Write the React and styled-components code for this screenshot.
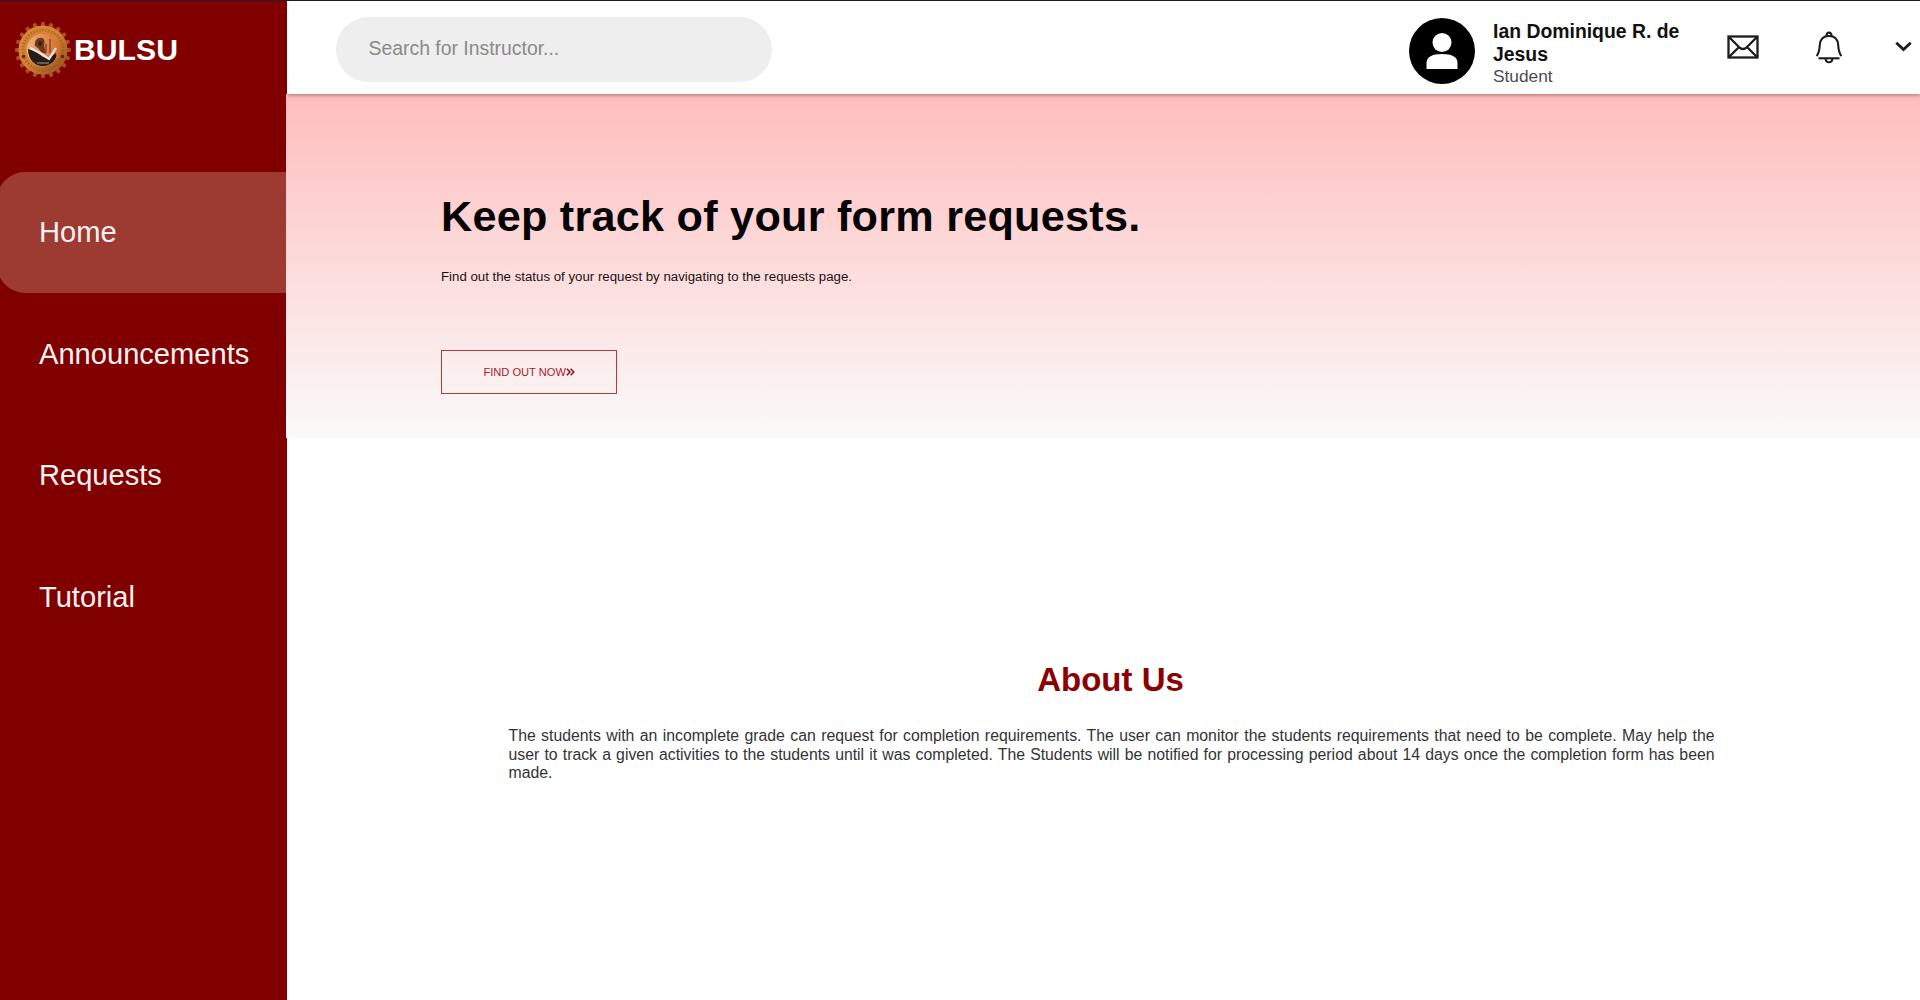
import React from "react";
import styled, { createGlobalStyle } from "styled-components";

const GlobalStyle = createGlobalStyle`
  * { box-sizing: border-box; }
  body {
    margin: 0;
    background: #fff;
    font-family: "Liberation Sans", Arial, sans-serif;
    overflow: hidden;
  }
`;

const Page = styled.div`
  display: flex;
  width: 1920px;
  height: 1000px;
  border-top: 1px solid #231a33;
  background: #fff;
`;

const Sidebar = styled.aside`
  flex: 0 0 287px;
  background: #800000;
  overflow: hidden;
`;

const Brand = styled.div`
  display: flex;
  align-items: center;
  gap: 3px;
  height: 98px;
  padding-left: 15px;
  color: #fff;
  font-size: 30.2px;
  font-weight: 700;
`;

const Nav = styled.nav`
  display: flex;
  flex-direction: column;
  padding-top: 72.6px;
`;

const NavItem = styled.a`
  display: flex;
  align-items: center;
  height: 121.7px;
  margin: 0 1.5px 0 -3px;
  padding-left: 42px;
  border-radius: 28px 0 0 28px;
  background: ${(p) => (p.$active ? "#9d3b33" : "transparent")};
  color: #f7f1f1;
  font-size: 29.1px;
`;

const Main = styled.main`
  display: flex;
  flex-direction: column;
  flex: 1;
  min-width: 0;
`;

const Header = styled.header`
  position: relative;
  z-index: 1;
  display: flex;
  align-items: flex-start;
  flex: 0 0 93px;
  padding: 0 8px 0 48.5px;
  background: #fff;
  box-shadow: 0 1px 4px rgba(60, 0, 0, 0.42);
`;

const Search = styled.input`
  width: 436px;
  height: 65px;
  margin: 15.6px auto 0 0;
  padding: 0 33px 1px;
  border: 0;
  border-radius: 33px;
  outline: 0;
  background: #eee;
  font: 19.4px "Liberation Sans", Arial, sans-serif;
  &::placeholder { color: #8a8a8a; opacity: 1; }
`;

const Avatar = styled.svg`
  width: 66px;
  height: 66px;
  margin: 17px 18.5px 0 0;
`;

const Profile = styled.div`
  width: 190px;
  margin: 19px 44px 0 0;
`;

const Name = styled.div`
  color: #111;
  font-size: 19.4px;
  font-weight: 700;
  line-height: 22.5px;
`;

const Role = styled.div`
  color: #4c4c4c;
  font-size: 17.3px;
  line-height: 22px;
`;

const HeaderIcon = styled.svg`
  flex: none;
  width: ${(p) => p.$w}px;
  height: ${(p) => p.$h}px;
  margin: ${(p) => p.$top}px ${(p) => p.$gap || 0}px 0 0;
  fill: none;
  stroke: #1c1c1c;
`;

const Hero = styled.section`
  display: flex;
  flex-direction: column;
  align-items: flex-start;
  flex: 0 0 344px;
  margin-left: -1px;
  padding: 97px 0 0 155px;
  background: linear-gradient(#ffbdbd, #fafafa);
`;

const Headline = styled.h1`
  margin: 0;
  color: #050303;
  font-size: 43.2px;
  line-height: 50px;
  letter-spacing: 0.25px;
`;

const Lead = styled.p`
  margin: 27.5px 0 65.5px;
  color: #1b1212;
  font-size: 13.25px;
  line-height: 16px;
`;

const FindButton = styled.button`
  display: flex;
  align-items: center;
  width: 176px;
  height: 44px;
  padding: 0 0 0 41.5px;
  border: 1px solid #b4383f;
  background: transparent;
  color: #a3222c;
  font: 11.1px "Liberation Sans", Arial, sans-serif;
  white-space: nowrap;
`;

const Chevrons = styled.svg`
  width: 9px;
  height: 8px;
  fill: none;
  stroke: #8b0f18;
  stroke-width: 1.5;
`;

const About = styled.section`
  width: 1206px;
  margin-left: 221.5px;
  padding-top: 223px;
`;

const AboutTitle = styled.h2`
  margin: 0;
  padding-right: 2px;
  color: #8b0000;
  font-size: 33px;
  line-height: 38px;
  text-align: center;
`;

const AboutText = styled.p`
  margin: 28px 0 0;
  color: #333;
  font-size: 15.8px;
  line-height: 18.6px;
  text-align: justify;
`;

const teeth = Array.from({ length: 20 }, (_, i) => i * 18);

function Seal() {
  return (
    <svg width="56" height="58" viewBox="-28 -29 56 58">
      <defs>
        <linearGradient id="rim" x1="0" y1="0" x2="1" y2="1">
          <stop offset="0" stopColor="#d98a35" />
          <stop offset=".5" stopColor="#d58035" />
          <stop offset="1" stopColor="#8e4a1b" />
        </linearGradient>
        <linearGradient id="face" x1="0" y1="0" x2="1" y2="0">
          <stop offset="0" stopColor="#e9b47a" />
          <stop offset="1" stopColor="#d96d2e" />
        </linearGradient>
      </defs>
      {teeth.map((a) => (
        <rect key={a} x="-2" y="-28" width="4" height="6" rx="1.2" fill="#a8501f" transform={`rotate(${a})`} />
      ))}
      <circle r="24.5" fill="url(#rim)" />
      <circle r="20" fill="none" stroke="#8d5a20" strokeWidth="3" strokeDasharray="1.4 1.7" opacity=".6" />
      <circle r="16.3" fill="url(#face)" />
      <path d="M-15-1L-8 1L0 7L6 8L13 3C15 9 8 16 0 16C-8 16-15 10-15-1Z" fill="#241c17" />
      <path d="M-8-4C-9-10-5-13-1-12C2-11 2-8 1-5L3 4L-2 2L-5-2Z" fill="#70351c" />
      <path d="M-4-9L-1-8L-2-4L-5-5Z" fill="#2c201c" />
      <path d="M7-11V3M3-6V3" stroke="#8f4b22" strokeWidth="1.5" />
      <path d="M-13-2L-3 3L6 9L13-2" fill="none" stroke="#e9e4df" strokeWidth="2.3" />
      <path d="M-6 13H6" stroke="#8c8680" strokeWidth="1.2" />
      <circle cx="-19.5" cy="6.5" r="1.8" fill="#5d281a" />
      <circle cx="19.5" cy="6.5" r="1.8" fill="#5d281a" />
    </svg>
  );
}

const links = ["Home", "Announcements", "Requests", "Tutorial"];

export default function App() {
  return (
    <>
      <GlobalStyle />
      <Page>
        <Sidebar>
          <Brand>
            <Seal />
            <span>BULSU</span>
          </Brand>
          <Nav>
            {links.map((label, i) => (
              <NavItem key={label} $active={i === 0}>{label}</NavItem>
            ))}
          </Nav>
        </Sidebar>
        <Main>
          <Header>
            <Search placeholder="Search for Instructor..." />
            <Avatar viewBox="0 0 66 66">
              <circle cx="33" cy="33" r="33" fill="#000" />
              <circle cx="33" cy="24.5" r="9.5" fill="#fff" />
              <path d="M17.5 51V45C17.5 39 23 36 33 36C43 36 48.500 39 48.500 45V51Z" fill="#fff" />
            </Avatar>
            <Profile>
              <Name>Ian Dominique R. de Jesus</Name>
              <Role>Student</Role>
            </Profile>
            <HeaderIcon $w={32} $h={24} $top={34} $gap={56} viewBox="0 0 32 24" strokeWidth="2.300">
              <rect x="1.500" y="1.500" width="29" height="21" />
              <path d="M2 2L12.500 12.500C14.500 14.500 17.500 14.500 19.500 12.500L30 2M2 22L12 12M30 22L20 12" />
            </HeaderIcon>
            <HeaderIcon $w={28} $h={33} $top={30} $gap={52} viewBox="0 0 28 33" strokeWidth="2.100">
              <path d="M1.500 25C4 22.500 4.500 19 4.800 14C5.200 8 9 5 14 5C19 5 22.800 8 23.200 14C23.500 19 24 22.500 26.500 25" />
              <path d="M3.500 27.300H24.500" />
              <path d="M11.500 5C11 .5 17 .5 16.500 5M10.500 27.500C11 32.500 17 32.500 17.500 27.500" />
            </HeaderIcon>
            <HeaderIcon $w={17} $h={11} $top={40} viewBox="0 0 17 11" strokeWidth="2.800">
              <path d="M1.300 1.800L8.500 8.500L15.700 1.800" />
            </HeaderIcon>
          </Header>
          <Hero>
            <Headline>Keep track of your form requests.</Headline>
            <Lead>Find out the status of your request by navigating to the requests page.</Lead>
            <FindButton>
              FIND OUT NOW
              <Chevrons viewBox="0 0 9 8">
                <path d="M.8.8L4 4L.8 7.200M4.600.8L7.800 4L4.600 7.200" />
              </Chevrons>
            </FindButton>
          </Hero>
          <About>
            <AboutTitle>About Us</AboutTitle>
            <AboutText>
              The students with an incomplete grade can request for completion requirements. The user can monitor the
              students requirements that need to be complete. May help the user to track a given activities to the
              students until it was completed. The Students will be notified for processing period about 14 days once
              the completion form has been made.
            </AboutText>
          </About>
        </Main>
      </Page>
    </>
  );
}
